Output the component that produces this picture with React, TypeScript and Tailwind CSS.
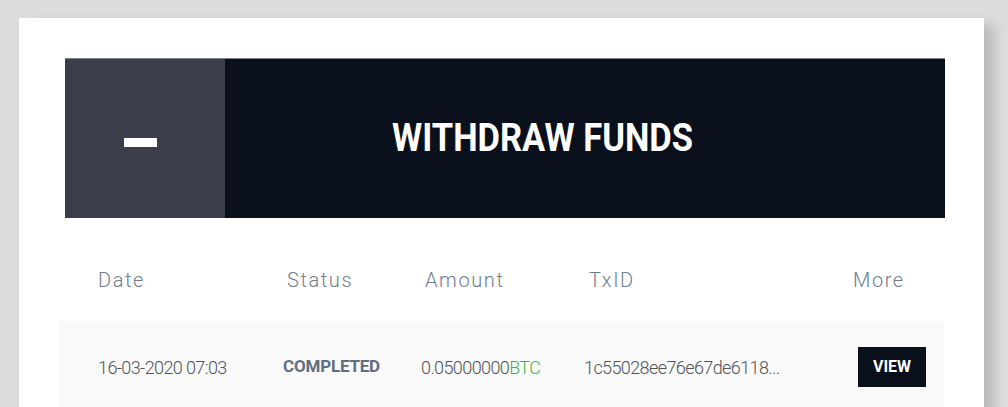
import React from 'react';

const rows = [
  {
    date: '16-03-2020 07:03',
    status: 'COMPLETED',
    amount: '0.05000000',
    coin: 'BTC',
    txid: '1c55028ee76e67de6118...',
  },
];

export default function App() {
  return (
    <div className="h-screen bg-[#dddddd] pt-[18px] pl-[19px] font-['Roboto',sans-serif] overflow-hidden">
      <div className="w-[965px] h-[420px] bg-white pt-[40px] shadow-[10px_6px_12px_rgba(0,0,0,0.16)]">
        {/* header */}
        <div className="ml-[46px] w-[880px] h-[160px] flex border-t border-[#80828a]">
          <div className="w-[160px] bg-[#3b3e4a] flex items-center justify-center pr-[9px] pt-[7px]">
            <div className="w-[33px] h-[9px] bg-white" />
          </div>
          <div className="flex-1 bg-[#0a0f1c] flex items-center pl-[167px]">
            <h1 className="text-white text-[39px] font-bold leading-none scale-x-[0.885] origin-left whitespace-nowrap">
              WITHDRAW FUNDS
            </h1>
          </div>
        </div>

        {/* table */}
        <div className="ml-[40px] w-[885px]">
          <div className="grid grid-cols-[185px_138px_163px_269px_1fr] pl-[39px] pt-[50px] pb-[29px] text-[20px] leading-[24px] font-light tracking-[1.6px] text-[#6f7d8e]">
            <div>Date</div>
            <div className="pl-[4px]">Status</div>
            <div className="pl-[4px]">Amount</div>
            <div className="pl-[5px]">TxID</div>
            <div>More</div>
          </div>
          {rows.map((r) => (
            <div
              key={r.txid}
              className="grid grid-cols-[185px_138px_163px_269px_1fr] items-center pl-[39px] py-[26px] bg-[#f9f9f9] text-[18px] font-light tracking-[-0.6px] text-[#505357]"
            >
              <div>{r.date}</div>
              <div className="text-[17px] font-bold tracking-[-0.2px] text-[#5f6e80]">{r.status}</div>
              <div>
                {r.amount}
                <span className="text-[#3ab54a]">{r.coin}</span>
              </div>
              <div>{r.txid}</div>
              <div className="pl-[5px]">
                <button className="w-[68px] h-[40px] bg-[#0a0f1c] text-white text-[16px] font-bold tracking-normal">
                  VIEW
                </button>
              </div>
            </div>
          ))}
        </div>
      </div>
    </div>
  );
}
